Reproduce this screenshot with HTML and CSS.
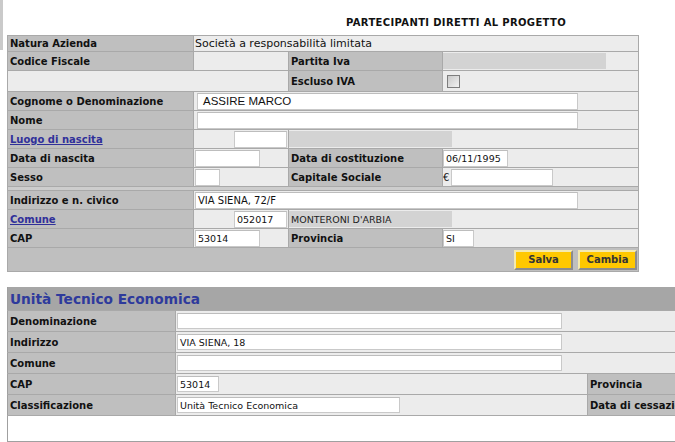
FILE: index.html
```html
<!DOCTYPE html>
<html lang="it">
<head>
<meta charset="utf-8">
<title>Partecipanti diretti al progetto</title>
<link rel="stylesheet" href="styles.css">
</head>
<body>
<div class="page">
  <div class="strip"></div>
  <div class="main">
    <div class="title">PARTECIPANTI DIRETTI AL PROGETTO</div>
    <table class="form">
      <colgroup><col class="fc1"><col class="fc2"><col class="fc3"><col class="fc4"></colgroup>
      <tr class="h16">
        <td class="lbl">Natura Azienda</td>
        <td class="val txt" colspan="3">Società a responsabilità limitata</td>
      </tr>
      <tr class="h18">
        <td class="lbl">Codice Fiscale</td>
        <td class="val"></td>
        <td class="lbl">Partita Iva</td>
        <td class="val nopad"><span class="ro ro-iva"></span></td>
      </tr>
      <tr class="h21">
        <td class="val" colspan="2"></td>
        <td class="lbl">Escluso IVA</td>
        <td class="val"><span class="chk"></span></td>
      </tr>
      <tr class="h19">
        <td class="lbl">Cognome o Denominazione</td>
        <td class="val" colspan="3"><span class="in in-name">ASSIRE MARCO</span></td>
      </tr>
      <tr class="h19">
        <td class="lbl">Nome</td>
        <td class="val" colspan="3"><span class="in in-name"></span></td>
      </tr>
      <tr class="h19">
        <td class="lbl"><a class="lnk" href="#">Luogo di nascita</a></td>
        <td class="val right"><span class="in in-code"></span></td>
        <td class="val nopad" colspan="2"><span class="ro ro-city"></span></td>
      </tr>
      <tr class="h19">
        <td class="lbl">Data di nascita</td>
        <td class="val"><span class="in in-date"></span></td>
        <td class="lbl">Data di costituzione</td>
        <td class="val nopad"><span class="in in-date">06/11/1995</span></td>
      </tr>
      <tr class="h19">
        <td class="lbl">Sesso</td>
        <td class="val"><span class="in in-sex"></span></td>
        <td class="lbl">Capitale Sociale</td>
        <td class="val nopad"><span class="euro">€</span><span class="in in-cap"></span></td>
      </tr>
      <tr class="sep"><td colspan="4"></td></tr>
      <tr class="h19">
        <td class="lbl">Indirizzo e n. civico</td>
        <td class="val" colspan="3"><span class="in in-addr">VIA SIENA, 72/F</span></td>
      </tr>
      <tr class="h19">
        <td class="lbl"><a class="lnk" href="#">Comune</a></td>
        <td class="val right"><span class="in in-code">052017</span></td>
        <td class="val nopad" colspan="2"><span class="ro ro-city">MONTERONI D'ARBIA</span></td>
      </tr>
      <tr class="h19">
        <td class="lbl">CAP</td>
        <td class="val"><span class="in in-date">53014</span></td>
        <td class="lbl">Provincia</td>
        <td class="val nopad"><span class="in in-prov">SI</span></td>
      </tr>
      <tr class="btnrow">
        <td colspan="4">
          <div class="btns">
            <button class="btn btn-salva" type="button">Salva</button>
            <button class="btn btn-cambia" type="button">Cambia</button>
          </div>
        </td>
      </tr>
    </table>

    <table class="ute">
      <colgroup><col class="uc1"><col class="uc2"><col class="uc3"><col class="uc4"></colgroup>
      <tr class="uhead"><td colspan="4">Unità Tecnico Economica</td></tr>
      <tr class="u21">
        <td class="lbl">Denominazione</td>
        <td class="val" colspan="3"><span class="in in-uwide"></span></td>
      </tr>
      <tr class="u21">
        <td class="lbl">Indirizzo</td>
        <td class="val" colspan="3"><span class="in in-uwide">VIA SIENA, 18</span></td>
      </tr>
      <tr class="u21">
        <td class="lbl">Comune</td>
        <td class="val" colspan="3"><span class="in in-uwide"></span></td>
      </tr>
      <tr class="u21">
        <td class="lbl">CAP</td>
        <td class="val"><span class="in in-ucap">53014</span></td>
        <td class="lbl">Provincia</td>
        <td class="val"></td>
      </tr>
      <tr class="u21">
        <td class="lbl">Classificazione</td>
        <td class="val"><span class="in in-uclass">Unità Tecnico Economica</span></td>
        <td class="lbl">Data di cessazione</td>
        <td class="val"></td>
      </tr>
      <tr class="ublank"><td colspan="4"></td></tr>
    </table>
  </div>
</div>
</body>
</html>
```

FILE: styles.css
```css
html, body {
  margin: 0;
  padding: 0;
  background: #ffffff;
  overflow: hidden;
}
body {
  font-family: "DejaVu Sans", Verdana, sans-serif;
  font-size: 10px;
  color: #111111;
}
.page {
  display: flex;
  align-items: flex-start;
}
.strip {
  flex: none;
  width: 3px;
  height: 50px;
  background: #cacaca;
}
.main {
  flex: none;
  margin-left: 4px;
}
.title {
  height: 35px;
  box-sizing: border-box;
  padding: 17px 0 0 339px;
  font-weight: bold;
  font-size: 10px;
  letter-spacing: 0.35px;
  color: #111;
}

/* top form */
.form {
  border-collapse: collapse;
  table-layout: fixed;
  width: 631px;
  border: 1px solid #a0a0a0;
}
.fc1 { width: 186px; }
.fc2 { width: 95px; }
.fc3 { width: 154px; }
.fc4 { width: 196px; }
.form td {
  border: 1px solid #a9a9a9;
  padding: 0 0 0 1px;
  vertical-align: middle;
  white-space: nowrap;
  overflow: hidden;
}
.form .h16 td { height: 15px; }
.form .h18 td { height: 18px; }
.form .h21 td { height: 20px; }
.form .h19 td { height: 18px; }
.lbl {
  background: #bfbfbf;
  font-weight: bold;
}
.form td.lbl { padding-left: 2px; }
.val {
  background: #ececec;
}
.form td.txt { font-size: 11px; }
.form td.nopad { padding-left: 0; }
.form td.right { text-align: right; padding-right: 1px; }
.lnk {
  color: #30309a;
  text-decoration: underline;
}
.form .sep td {
  height: 3px;
  padding: 0;
  background: #cdcdcd;
}

.in {
  display: inline-block;
  vertical-align: middle;
  box-sizing: border-box;
  height: 17px;
  line-height: 15px;
  padding-left: 2px;
  background: #ffffff;
  border: 1px solid #c9c9c9;
  border-top-color: #bdbdbd;
  text-align: left;
  font-size: 9.5px;
  color: #111;
  overflow: hidden;
}
.in-name {
  width: 381px;
  margin-left: 2px;
  font-family: "Liberation Sans", Arial, sans-serif;
  font-size: 11.5px;
  padding-left: 5px;
}
.in-addr { width: 383px; font-size: 10px; }
.in-code { width: 53px; }
.in-date { width: 65px; }
.in-sex { width: 25px; }
.in-cap { width: 102px; }
.in-prov { width: 31px; }
.euro {
  display: inline-block;
  vertical-align: middle;
  width: 8px;
  font-size: 10px;
}
.ro {
  display: inline-block;
  vertical-align: middle;
  box-sizing: border-box;
  height: 16px;
  line-height: 17px;
  padding-left: 2px;
  background: #d3d3d3;
  font-size: 9.5px;
  color: #222;
}
.ro-iva { width: 163px; }
.ro-city { width: 163px; }
.chk {
  display: inline-block;
  vertical-align: middle;
  box-sizing: border-box;
  width: 13px;
  height: 13px;
  margin-left: 3px;
  border: 1px solid #7d7d7d;
  background: linear-gradient(135deg, #c9c9c9, #f2f2f2);
}

.form .btnrow td {
  height: 23px;
  padding: 0;
  background: #bfbfbf;
}
.btns {
  display: flex;
  justify-content: flex-end;
  gap: 5px;
  padding-right: 1px;
}
.btn {
  box-sizing: border-box;
  height: 20px;
  padding: 0;
  font-family: "DejaVu Sans", Verdana, sans-serif;
  font-size: 10px;
  font-weight: bold;
  color: #333;
  background: #ffc800;
  border: 2px solid;
  border-color: #f3e9b0 #8c8c8c #8c8c8c #f3e9b0;
}
.btn-salva { width: 59px; }
.btn-cambia { width: 59px; }

/* second section */
.ute {
  margin-top: 15px;
  border-collapse: collapse;
  table-layout: fixed;
  width: 930px;
  border-left: 1px solid #a0a0a0;
  border-bottom: 1px solid #a0a0a0;
}
.uc1 { width: 168px; }
.uc2 { width: 412px; }
.uc3 { width: 150px; }
.uc4 { width: 200px; }
.ute td {
  border-top: 1px solid #a9a9a9;
  border-right: 1px solid #a9a9a9;
  padding: 0 0 0 1px;
  white-space: nowrap;
  overflow: hidden;
}
.ute td.lbl { padding-left: 2px; }
.ute .uhead td {
  height: 23px;
  padding: 0 0 0 2px;
  background: #a6a6a6;
  border: none;
  color: #2e3a9c;
  font-weight: bold;
  font-size: 13.7px;
}
.ute .u21 td { height: 20px; }
.ute .ublank td {
  height: 25px;
  background: #ffffff;
}
.in-uwide { width: 385px; height: 16px; }
.in-ucap { width: 42px; height: 16px; }
.in-uclass { width: 223px; height: 16px; }
```
